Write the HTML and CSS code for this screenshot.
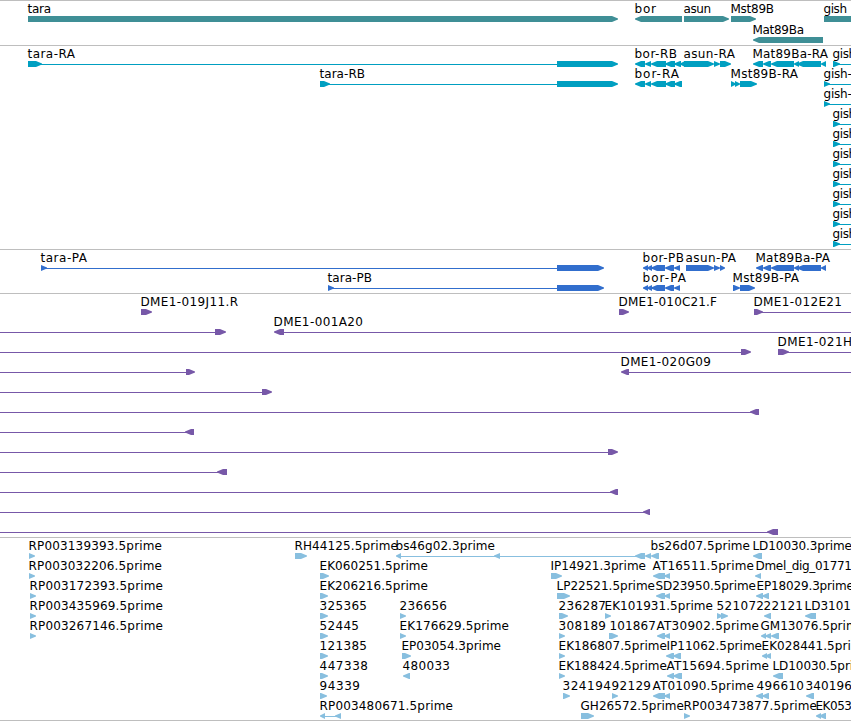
FILE: index.html
```html
<!DOCTYPE html>
<html lang="en">
<head>
<meta charset="utf-8">
<title>Genome tracks</title>
<link rel="stylesheet" href="styles.css">
</head>
<body>
<main class="browser">
<svg class="track genes" id="genes"></svg>
<svg class="track transcripts" id="transcripts"></svg>
<svg class="track proteins" id="proteins"></svg>
<svg class="track clones" id="clones"></svg>
<svg class="track reads" id="reads"></svg>
</main>
<script src="tracks.js"></script>
</body>
</html>
```
FILE: styles.css
```css
body {
  margin: 0;
  background: #fff;
  overflow: hidden;
}
.browser {
  display: flex;
  flex-direction: column;
  width: 851px;
  height: 720px;
  border-bottom: 1px solid #bebebe;
}
.track {
  display: block;
  box-sizing: border-box;
  flex: none;
  width: 851px;
  border-top: 1px solid #bebebe;
  overflow: hidden;
}
.track text {
  font: 12px "DejaVu Sans", sans-serif;
  fill: #000;
}
.genes { height: 45px; color: #3f8f96; }
.transcripts { height: 204px; color: #009fc1; }
.proteins { height: 44px; color: #316ecd; }
.clones { height: 244px; color: #7758a8; }
.reads { height: 183px; color: #88bfdf; }
.glyph { fill: currentColor; }
```
FILE: tracks.js
```js
// One feature per line: row | label | label start | label end | parts.
// A part is start-end followed by > (forward), < (reverse) or = (connector).
const data = {
genes: `
0|tara|28|51|28-618>
0|bor|635|656|635-682<
0|asun|684|711|684-729>
0|Mst89B|731|774|731-756>
0|gish|824|847|824-870>
1|Mat89Ba|753|804|753-823<`,
transcripts: `
0|tara-RA|28|75|28-42> 41-557= 557-618>
0|bor-RB|635|677|635-645< 645-651< 651-666< 665-675< 674-681< 680-685<
0|asun-RA|684|735|684-714> 714-720> 720-731>
0|Mat89Ba-RA|753|828|753-763< 763-771< 771-794< 794-799< 797-821< 821-826<
0|gish-R|833|868|833-840> 838-851=
1|tara-RB|320|365|320-330> 329-557= 557-618>
1|bor-RA|635|679|635-645< 645-651< 651-666< 665-675< 674-682<
1|Mst89B-RA|731|798|731-736> 735-740> 740-757>
1|gish-R|824|860|824-830> 828-851=
2|gish-R|824|860|824-830> 828-851=
3|gish-R|833|868|833-840> 838-851=
4|gish-R|833|868|833-840> 838-851=
5|gish-R|833|868|833-840> 838-851=
6|gish-R|833|868|833-840> 838-851=
7|gish-R|833|868|833-840> 838-851=
8|gish-R|833|868|833-840> 838-851=
9|gish-R|833|868|833-840> 838-851=`,
proteins: `
0|tara-PA|41|87|41-47> 45-557= 557-604>
0|bor-PB|643|684|643-648< 647-652< 651-665< 665-674< 674-680<
0|asun-PA|686|736|686-714> 714-720> 720-725>
0|Mat89Ba-PA|756|830|756-763< 763-771< 771-794< 794-799< 797-821< 821-826<
1|tara-PB|328|372|328-334> 332-557= 557-604>
1|bor-PA|643|686|643-648< 647-652< 651-665< 665-674< 674-680<
1|Mst89B-PA|733|799|733-740> 740-755>`,
clones: `
0|DME1-019J11.R|141|238|141-152>
0|DME1-010C21.F|619|717|619-629>
0|DME1-012E21|754|842|754-763> 762-851=
1||0|0|0-216= 215-226>
1|DME1-001A20|274|363|274-284< 284-851=
2||0|0|0-742= 741-751>
2|DME1-021H|778|852|778-789> 788-851=
3||0|0|0-187= 186-195>
3|DME1-020G09|621|711|621-629< 629-851=
4||0|0|0-263= 262-272>
5||0|0|0-752= 750-759<
6||0|0|0-187= 185-194<
7||0|0|0-609= 608-618>
8||0|0|0-219= 217-227<
9||0|0|0-612= 610-618<
10||0|0|0-646= 643-650<
11||0|0|0-769= 767-778<`,
reads: `
0|RP003139393.5prime|29|162|29-35>
0|RH44125.5prime|295|398|295-307>
0|bs46g02.3prime|396|495|396-401< 400-496= 494-500< 499-636= 635-645< 645-651< 651-659<
0|bs26d07.5prime|651|750|
0|LD10030.3prime|753|852|753-762<
1|RP003032206.5prime|29|162|29-35>
1|EK060251.5prime|320|428|320-329>
1|IP14921.3prime|551|646|551-562>
1|AT16511.5prime|653|754|653-665< 664-670<
1|Dmel_dig_01771|756|852|755-761<
2|RP003172393.5prime|30|163|30-36>
2|EK206216.5prime|320|428|320-328>
2|LP22521.5prime|557|655|557-570>
2|SD23950.5prime|656|756|656-665< 664-670<
2|EP18029.3prime|757|854|756-763< 762-769<
3|RP003435969.5prime|30|163|30-36>
3|325365|320|367|320-328>
3|236656|400|447|400-406>
3|236287|559|606|559-568>
3|EK101931.5prime|605|713|605-611>
3|521072|717|764|717-723> 721-728>
3|22121|764|803|764-771<
3|LD3101|805|851|805-816<
4|RP003267146.5prime|30|163|30-36>
4|52445|320|359|320-328>
4|EK176629.5prime|400|509|400-406>
4|308189|559|606|559-565>
4|101867|610|656|609-618>
4|AT30902.5prime|657|759|657-665< 664-670<
4|GM13076.5prime|761|865|761-766< 765-771< 771-779<
5|121385|320|367|320-328>
5|EP03054.3prime|402|501|402-411>
5|EK186807.5prime|559|667|559-565>
5|IP11062.5prime|667|762|666-674< 673-681<
5|EK028441.5prime|762|870|762-767< 765-771<
6|447338|320|368|320-328>
6|480033|403|450|403-410<
6|EK188424.5prime|559|667|559-565>
6|AT15694.5prime|667|769|667-674< 673-682<
6|LD10030.5prime|773|872|773-783<
7|94339|320|360|320-327>
7|324194|563|611|563-570>
7|92129|612|651|612-618>
7|AT01090.5prime|653|754|653-665< 664-670<
7|496610|757|804|756-763< 762-769<
7|340196|806|852|806-814<
8|RP003480671.5prime|320|453|320-325< 324-337= 335-341<
8|GH26572.5prime|581|684|581-594>
8|RP003473877.5prime|684|817|684-690>
8|EK053|816|852|816-821< 819-826<`
};

const ns = 'http://www.w3.org/2000/svg';

function add(parent, name, attrs) {
  const el = document.createElementNS(ns, name);
  for (const key in attrs) el.setAttribute(key, attrs[key]);
  parent.appendChild(el);
  return el;
}

function arrow(a, b, y, dir) {
  const head = Math.min(6, b - a);
  const tip = dir === '>' ? b : a;
  const neck = dir === '>' ? b - head : a + head;
  const tail = dir === '>' ? a : b;
  return `${tail},${y} ${neck},${y} ${tip},${y + 2.4} ${tip},${y + 3.6} ${neck},${y + 6} ${tail},${y + 6}`;
}

for (const id in data) {
  const svg = document.getElementById(id);
  const pitch = id === 'genes' ? 21 : 20;
  for (const line of data[id].trim().split('\n')) {
    const [row, label, start, end, parts] = line.split('|');
    const top = row * pitch;
    for (const part of parts.split(' ').filter(Boolean)) {
      const [, a, b, kind] = part.match(/(\d+)-(\d+)(.)/);
      if (kind === '=') {
        add(svg, 'rect', { class: 'glyph', x: a, y: top + 18, width: b - a, height: 1 });
      } else {
        add(svg, 'polygon', { class: 'glyph', points: arrow(+a, +b, top + 15, kind) });
      }
    }
    if (label) {
      add(svg, 'text', { x: start - 0.5, y: top + 12, textLength: end - start + 0.5 }).textContent = label;
    }
  }
}
```
